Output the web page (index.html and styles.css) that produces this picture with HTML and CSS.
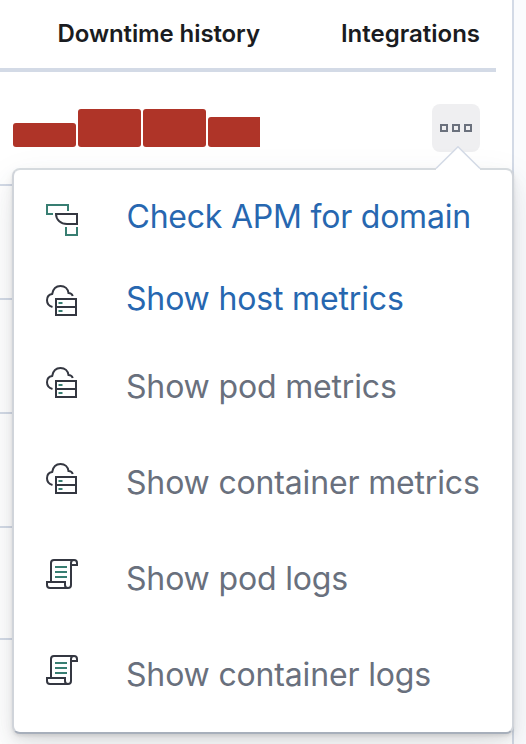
FILE: index.html
```html
<!DOCTYPE html>
<html lang="en">
<head>
<meta charset="utf-8">
<title>Monitor integrations</title>
<link rel="stylesheet" href="styles.css">
</head>
<body>
<svg class="defs" width="0" height="0" aria-hidden="true">
  <symbol id="apm" viewBox="0 0 32 32"><path class="accent" d="M7 10H1V1h21v6M20 23v8h11v-8"/><path d="M10 10h21v10H21C15 20 10 16 10 10z"/></symbol>
  <symbol id="metrics" viewBox="0 0 32 32"><path d="M6.500 23C3 22 1 19.500 1 16.200C1 13 3.200 10.500 6.200 10C7 5.300 10 2 14.500 2C19 2 22 5 22.500 9C24.500 9 26 10 26.800 12M10 15h20v16H10zM10 23h20"/><path class="accent" d="M12.500 19h4M12.500 27h4"/></symbol>
  <symbol id="logs" viewBox="0 0 32 32"><path d="M5 24V5Q5 2 8 2H28Q31 2 31 5V7H25M28 2Q25 2 25 5V27Q25 30 22 30H4Q1 30 1 27V24H19V27Q19 30 22 30"/><path class="accent" d="M9 9h12M9 14h12M9 19h12"/></symbol>
</svg>
<main class="panel">
  <header class="head"><span class="history-title">Downtime history</span><span class="integrations-title">Integrations</span></header>
  <section class="row first">
    <div class="bars"><i class="bar low"></i><i class="bar"></i><i class="bar"></i><i class="bar cut"></i></div>
    <button class="more" aria-label="Open integrations"><i></i><i></i><i></i></button>
  </section>
  <div class="row"></div><div class="row"></div><div class="row"></div><div class="row short"></div>
</main>
<nav class="popover">
  <svg class="arrow" width="46" height="24" viewBox="0 0 46 24"><path class="fill" d="M1 24V22L23 1l22 21v2z"/><path class="edge" d="M1 22.500L23 .8l22 21.700"/></svg>
  <a class="item link apm"><svg class="icon"><use href="#apm"/></svg><span>Check APM for domain</span></a>
  <a class="item link host"><svg class="icon"><use href="#metrics"/></svg><span>Show host metrics</span></a>
  <a class="item"><svg class="icon"><use href="#metrics"/></svg><span>Show pod metrics</span></a>
  <a class="item"><svg class="icon"><use href="#metrics"/></svg><span>Show container metrics</span></a>
  <a class="item"><svg class="icon"><use href="#logs"/></svg><span>Show pod logs</span></a>
  <a class="item"><svg class="icon"><use href="#logs"/></svg><span>Show container logs</span></a>
</nav>
</body>
</html>
```
FILE: styles.css
```css
* { box-sizing: border-box; }
body { margin: 0; width: 526px; height: 744px; overflow: hidden; position: relative; background: #fafbfd; font-family: Inter, sans-serif; color: #1a1c21; }
.defs { position: absolute; }
.panel { width: 514px; height: 744px; background: #fff; border-right: 2px solid #d3dae6; padding-right: 16px; overflow: hidden; }
.head { height: 72px; border-bottom: 4px solid #d3dae6; padding: 18px 16px 0 57.500px; display: flex; justify-content: space-between; font-size: 24px; line-height: 32px; font-weight: 600; letter-spacing: -.1px; }
.integrations-title { letter-spacing: 0; }
.row { height: 114px; border-bottom: 2px solid #d3dae6; }
.row.short { height: 112px; }
.row.first { display: flex; justify-content: space-between; align-items: flex-start; padding: 32px 16px 0 13px; }
.bars { display: flex; gap: 2px; width: 247px; height: 43px; align-items: flex-end; overflow: hidden; }
.bar { flex: 0 0 63px; height: 38px; border-radius: 3px; background: #af3428; }
.bar.low { height: 24.500px; }
.bar.cut { height: 30.300px; }
.more { width: 48px; height: 48px; border: 0; border-radius: 8px; padding: 0; background: #efeff1; display: flex; align-items: center; justify-content: center; gap: 4px; }
.more i { width: 8px; height: 8px; border: 2px solid #6b717d; }
.popover { position: absolute; left: 12px; top: 168px; width: 502px; height: 566px; background: #fff; border: 2px solid #d0d4da; border-top-color: #d5dade; border-bottom-color: #a7afbb; border-radius: 8px; padding-top: 4px; box-shadow: 0 2px 3px rgba(0,0,0,.07), 0 4px 8px rgba(0,0,0,.05), 0 9px 20px rgba(0,0,0,.06), 0 16px 40px rgba(65,78,101,.1); }
.arrow { position: absolute; left: 421px; top: -24px; }
.arrow .fill { fill: #fff; }
.arrow .edge { fill: none; stroke: #d3dae6; stroke-width: 1.500; }
.item { height: 96px; padding-left: 32px; display: flex; align-items: center; color: #69707d; font-size: 32px; line-height: 48px; letter-spacing: -.16px; white-space: nowrap; }
.item span { padding-top: 10px; }
.item.link { color: #2767b0; }
.item.apm { height: 92px; letter-spacing: -.22px; }
.item.apm span { padding: 0 0 6px .5px; }
.item.host { height: 68px; }
.item.host span { padding: 0 0 2px; }
.icon { width: 32px; height: 32px; margin-right: 48px; flex: none; fill: none; stroke: #343741; stroke-width: 2; }
.accent { stroke: #387e72; }
```
